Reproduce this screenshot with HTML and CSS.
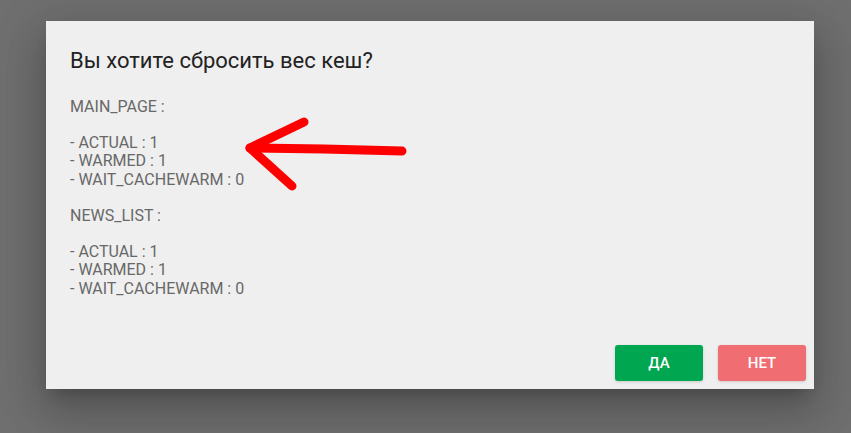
FILE: index.html
```html
<!DOCTYPE html>
<html lang="ru">
<head>
<meta charset="utf-8">
<link rel="stylesheet" href="styles.css">
</head>
<body>
<div class="dialog">
  <h2 class="title">Вы хотите сбросить вес кеш?</h2>
  <div class="content">
    <p>MAIN_PAGE :</p>
    <p>- ACTUAL : 1<br>- WARMED : 1<br>- WAIT_CACHEWARM : 0</p>
    <p>NEWS_LIST :</p>
    <p>- ACTUAL : 1<br>- WARMED : 1<br>- WAIT_CACHEWARM : 0</p>
  </div>
  <div class="actions">
    <button class="btn btn-yes">ДА</button>
    <button class="btn btn-no">НЕТ</button>
  </div>
  <svg class="arrow" width="170" height="80" viewBox="0 0 170 80">
    <g fill="none" stroke="#ff0000" stroke-width="9" stroke-linecap="round" stroke-linejoin="round">
      <path d="M60 8 L6 34 L48 72"/>
      <path d="M6 34 L80 35 L158 37"/>
    </g>
  </svg>
</div>
</body>
</html>
```
FILE: styles.css
```css
html, body {
  margin: 0;
  height: 100%;
}
body {
  background: #6f6f6f;
  padding: 21px 0 0 46px;
  box-sizing: border-box;
  font-family: Roboto, "Liberation Sans", sans-serif;
}
.dialog {
  position: relative;
  width: 768px;
  height: 368px;
  background: #efefef;
  box-shadow: 0 11px 15px -7px rgba(0,0,0,0.2), 0 24px 38px 3px rgba(0,0,0,0.14), 0 9px 46px 8px rgba(0,0,0,0.12);
  display: flex;
  flex-direction: column;
  box-sizing: border-box;
}
.title {
  margin: 0;
  padding: 24px 24px 21px;
  font-size: 22px;
  font-weight: 400;
  line-height: 32px;
  color: #222;
}
.content {
  flex: 1;
  padding: 0 24px;
  font-size: 16px;
  line-height: 18.6px;
  color: #686868;
}
.content p {
  margin: 0 0 17.3px;
}
.actions {
  display: flex;
  justify-content: flex-end;
  gap: 15px;
  padding: 8px;
}
.btn {
  width: 88px;
  height: 36px;
  border: none;
  border-radius: 3px;
  color: #fff;
  font-family: Roboto, "Liberation Sans", sans-serif;
  font-size: 15px;
  font-weight: 500;
  box-shadow: 0 1px 3px rgba(0,0,0,0.15);
}
.btn-yes { background: #00a650; }
.btn-no { background: #f06d72; }
.arrow {
  position: absolute;
  left: 198px;
  top: 93px;
}
```
